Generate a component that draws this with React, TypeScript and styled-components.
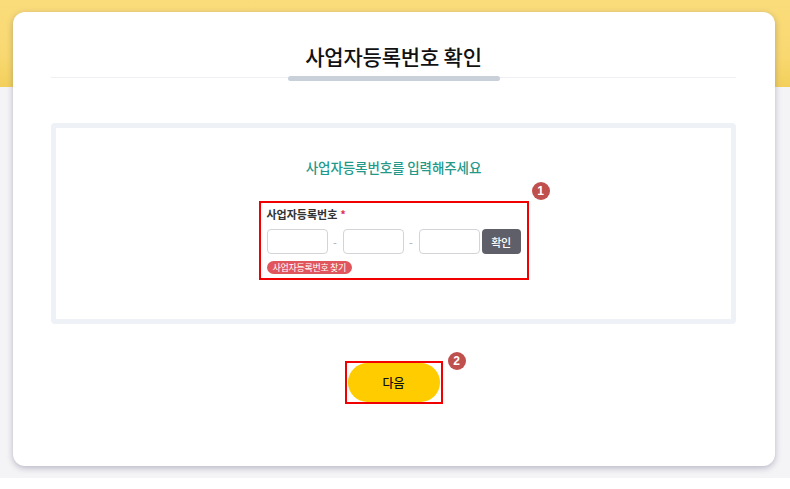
import styled, {createGlobalStyle} from "styled-components";

const GlobalStyle = createGlobalStyle`
    html, body {
        margin: 0;
        padding: 0;
        background: #ffffff;
    }

    body {
        font-family: "Noto Sans CJK KR", "Noto Sans", sans-serif;
        color: #222;
    }
`

const Page = styled.div`
    height: 478px;
    box-sizing: border-box;
    padding: 12px 15px 0 13px;
    background: linear-gradient(
            180deg,
            #fadc7b 0px,
            #f8d870 56px,
            #f3d05c 87px,
            #f4f4f6 87px,
            #f4f4f6 100%
    );
`

const Card = styled.div`
    height: 454px;
    box-sizing: border-box;
    padding: 0 39px 0 38px;
    background: #fff;
    border-radius: 12px;
    box-shadow: 0 2px 6px rgba(70, 66, 110, 0.35);
    display: flex;
    flex-direction: column;
    align-items: stretch;
`

const Header = styled.div`
    position: relative;
    padding: 30px 0 7px;
    border-bottom: 1px solid #eef0f4;
    text-align: center;

    &::after {
        content: "";
        position: absolute;
        left: 50%;
        bottom: -4px;
        width: 212px;
        height: 5px;
        margin-left: -106px;
        border-radius: 3px;
        background: #c9d0da;
    }
`

const Title = styled.h2`
    margin: 0;
    font-size: 21px;
    line-height: 28px;
    font-weight: 500;
    letter-spacing: -0.2px;
    color: #111;
`

const InputPanel = styled.section`
    margin-top: 45px;
    height: 201px;
    box-sizing: border-box;
    border: 5px solid #eef1f6;
    border-radius: 4px;
    padding-top: 31px;
    display: flex;
    flex-direction: column;
    align-items: center;
`

const Guide = styled.p`
    margin: 0 0 26px;
    font-size: 13.5px;
    line-height: 16px;
    font-weight: 500;
    letter-spacing: -0.1px;
    color: #23998a;
`

const Marked = styled.div`
    position: relative;
    border: 2px solid #f00000;
`

const FormBox = styled(Marked)`
    width: 270px;
    box-sizing: border-box;
    padding: 3px 6px 4px;
`

const Badge = styled.span<{ $top: number, $right: number }>`
    position: absolute;
    top: ${p => p.$top}px;
    right: ${p => p.$right}px;
    width: 18px;
    height: 18px;
    border-radius: 50%;
    background: #c0504d;
    color: #fff;
    font-family: "Liberation Sans", sans-serif;
    font-size: 12px;
    font-weight: 700;
    line-height: 18px;
    text-align: center;
`

const Label = styled.div`
    font-size: 11px;
    line-height: 16px;
    font-weight: 700;
    letter-spacing: 0;
    color: #333;

    em {
        font-style: normal;
        color: #e0305a;
        margin-left: 3px;
        font-size: 11px;
    }
`

const InputRow = styled.div`
    margin-top: 7px;
    display: flex;
    align-items: center;
`

const Field = styled.input`
    width: 61px;
    height: 25px;
    box-sizing: border-box;
    border: 1px solid #d2d4d8;
    border-radius: 4px;
    background: #fff;
    padding: 0 6px;
    outline: none;
`

const Dash = styled.span`
    width: 15px;
    text-align: center;
    font-size: 11px;
    color: #aaa;
`

const CheckButton = styled.button`
    margin-left: 2px;
    width: 39px;
    height: 25px;
    border: 0;
    border-radius: 4px;
    background: #5e5f69;
    color: #fff;
    font-family: inherit;
    font-size: 11px;
    font-weight: 500;
    letter-spacing: -0.3px;
    padding: 0;
`

const FindPill = styled.button`
    margin-top: 7px;
    height: 13px;
    padding: 0 6px;
    border: 0;
    border-radius: 7px;
    background: #e0565c;
    color: #fff;
    font-family: inherit;
    font-size: 9px;
    line-height: 13px;
    letter-spacing: -0.3px;
    display: block;
`

const Footer = styled.div`
    margin-top: 37px;
    display: flex;
    justify-content: center;
`

const NextBox = styled(Marked)`
    padding: 0 1px 0 1px;
    width: 98px;
    height: 43px;
    box-sizing: border-box;
    display: flex;
    align-items: center;
`

const NextButton = styled.button`
    width: 93px;
    height: 39px;
    border: 0;
    border-radius: 20px;
    background: #ffcc00;
    color: #111;
    font-family: inherit;
    font-size: 12px;
    font-weight: 500;
`

export default function App() {
    return (
        <>
            <GlobalStyle/>
            <Page>
                <Card>
                    <Header>
                        <Title>사업자등록번호 확인</Title>
                    </Header>

                    <InputPanel>
                        <Guide>사업자등록번호를 입력해주세요</Guide>
                        <FormBox>
                            <Badge $top={-21} $right={-23}>1</Badge>
                            <Label>사업자등록번호<em>*</em></Label>
                            <InputRow>
                                <Field/>
                                <Dash>-</Dash>
                                <Field/>
                                <Dash>-</Dash>
                                <Field/>
                                <CheckButton>확인</CheckButton>
                            </InputRow>
                            <FindPill>사업자등록번호 찾기</FindPill>
                        </FormBox>
                    </InputPanel>

                    <Footer>
                        <NextBox>
                            <Badge $top={-11} $right={-25}>2</Badge>
                            <NextButton>다음</NextButton>
                        </NextBox>
                    </Footer>
                </Card>
            </Page>
        </>
    );
}
